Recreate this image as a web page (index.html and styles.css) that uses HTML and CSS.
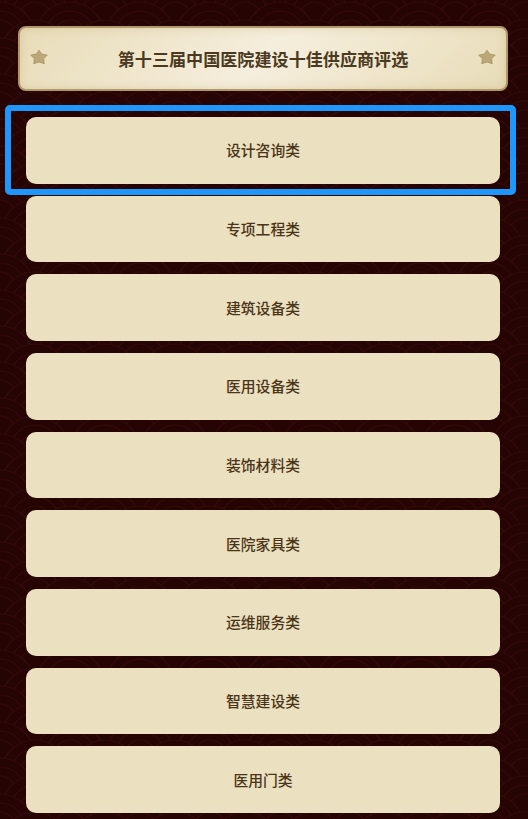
FILE: index.html
```html
<!DOCTYPE html>
<html lang="zh-CN">
<head>
    <meta charset="UTF-8">
    <meta name="viewport" content="width=device-width, initial-scale=1.0">
    <title>第十三届中国医院建设十佳供应商评选</title>
    <link rel="stylesheet" href="styles.css">
</head>
<body>
    <div class="page">
        <header class="title-bar">
            <svg class="star" viewBox="0 0 20 16"><path d="M10 1.200l2.600 3.800 5.600 1.100-3.500 3.600.5 5-5.200-1.700-5.200 1.700.5-5-3.500-3.600 5.600-1.100z"/></svg>
            <h1>第十三届中国医院建设十佳供应商评选</h1>
            <svg class="star" viewBox="0 0 20 16"><path d="M10 1.200l2.600 3.800 5.600 1.100-3.500 3.600.5 5-5.200-1.700-5.200 1.700.5-5-3.500-3.600 5.600-1.100z"/></svg>
        </header>

        <ul class="category-list">
            <li class="category-item is-focused">设计咨询类</li>
            <li class="category-item">专项工程类</li>
            <li class="category-item">建筑设备类</li>
            <li class="category-item">医用设备类</li>
            <li class="category-item">装饰材料类</li>
            <li class="category-item">医院家具类</li>
            <li class="category-item">运维服务类</li>
            <li class="category-item">智慧建设类</li>
            <li class="category-item">医用门类</li>
        </ul>
    </div>
</body>
</html>
```

FILE: styles.css
```css
* {
    margin: 0;
    padding: 0;
    box-sizing: border-box;
}

html, body {
    height: 100%;
}

body {
    font-family: "Liberation Sans", "Noto Sans CJK SC", sans-serif;
    background-color: #260404;
    background-image: url("data:image/svg+xml,%3Csvg xmlns='http://www.w3.org/2000/svg' xmlns:xlink='http://www.w3.org/1999/xlink' width='70' height='36'%3E%3Cdefs%3E%3Cg id='s' stroke='%23330909' stroke-width='1.200'%3E%3Ccircle r='34' fill='%23260404'/%3E%3Ccircle r='25' fill='none'/%3E%3Ccircle r='16' fill='none'/%3E%3C/g%3E%3C/defs%3E%3Cuse xlink:href='%23s' x='0' y='0'/%3E%3Cuse xlink:href='%23s' x='70' y='0'/%3E%3Cuse xlink:href='%23s' x='35' y='18'/%3E%3Cuse xlink:href='%23s' x='0' y='36'/%3E%3Cuse xlink:href='%23s' x='70' y='36'/%3E%3Cuse xlink:href='%23s' x='35' y='54'/%3E%3Cuse xlink:href='%23s' x='0' y='72'/%3E%3Cuse xlink:href='%23s' x='70' y='72'/%3E%3C/svg%3E");
    overflow: hidden;
}

.page {
    padding: 25.5px 20px 0 18px;
}

.title-bar {
    height: 65px;
    display: flex;
    align-items: center;
    justify-content: space-between;
    padding: 0 9px;
    border: 2px solid #b09869;
    border-radius: 8px;
    background: linear-gradient(135deg, #e8dcb8 0%, #f5eedc 50%, #e8dcb8 100%);
    box-shadow: inset 0 0 10px rgba(190, 165, 115, 0.35);
}

.title-bar h1 {
    font-size: 17.1px;
    font-weight: 700;
    color: #4b3a22;
}

.star {
    width: 20px;
    height: 16px;
    margin-top: -3px;
    fill: #bba878;
    stroke: #a8925f;
    stroke-width: 0.8;
    stroke-linejoin: round;
}

.category-list {
    list-style: none;
    display: flex;
    flex-direction: column;
    gap: 12px;
    margin: 26.5px 8px 0 8px;
}

.category-item {
    position: relative;
    height: 66.67px;
    display: flex;
    align-items: center;
    justify-content: center;
    padding-bottom: 1px;
    border-radius: 10px;
    background: #ebe0c0;
    color: #4a3518;
    font-size: 14.8px;
    font-weight: 500;
}

/* focus ring sits over the neighbouring rows */
.is-focused::after {
    content: "";
    position: absolute;
    top: -12px;
    left: -21px;
    right: -16px;
    bottom: -11px;
    border: 6px solid #1e96fa;
    border-radius: 5px;
}
```
